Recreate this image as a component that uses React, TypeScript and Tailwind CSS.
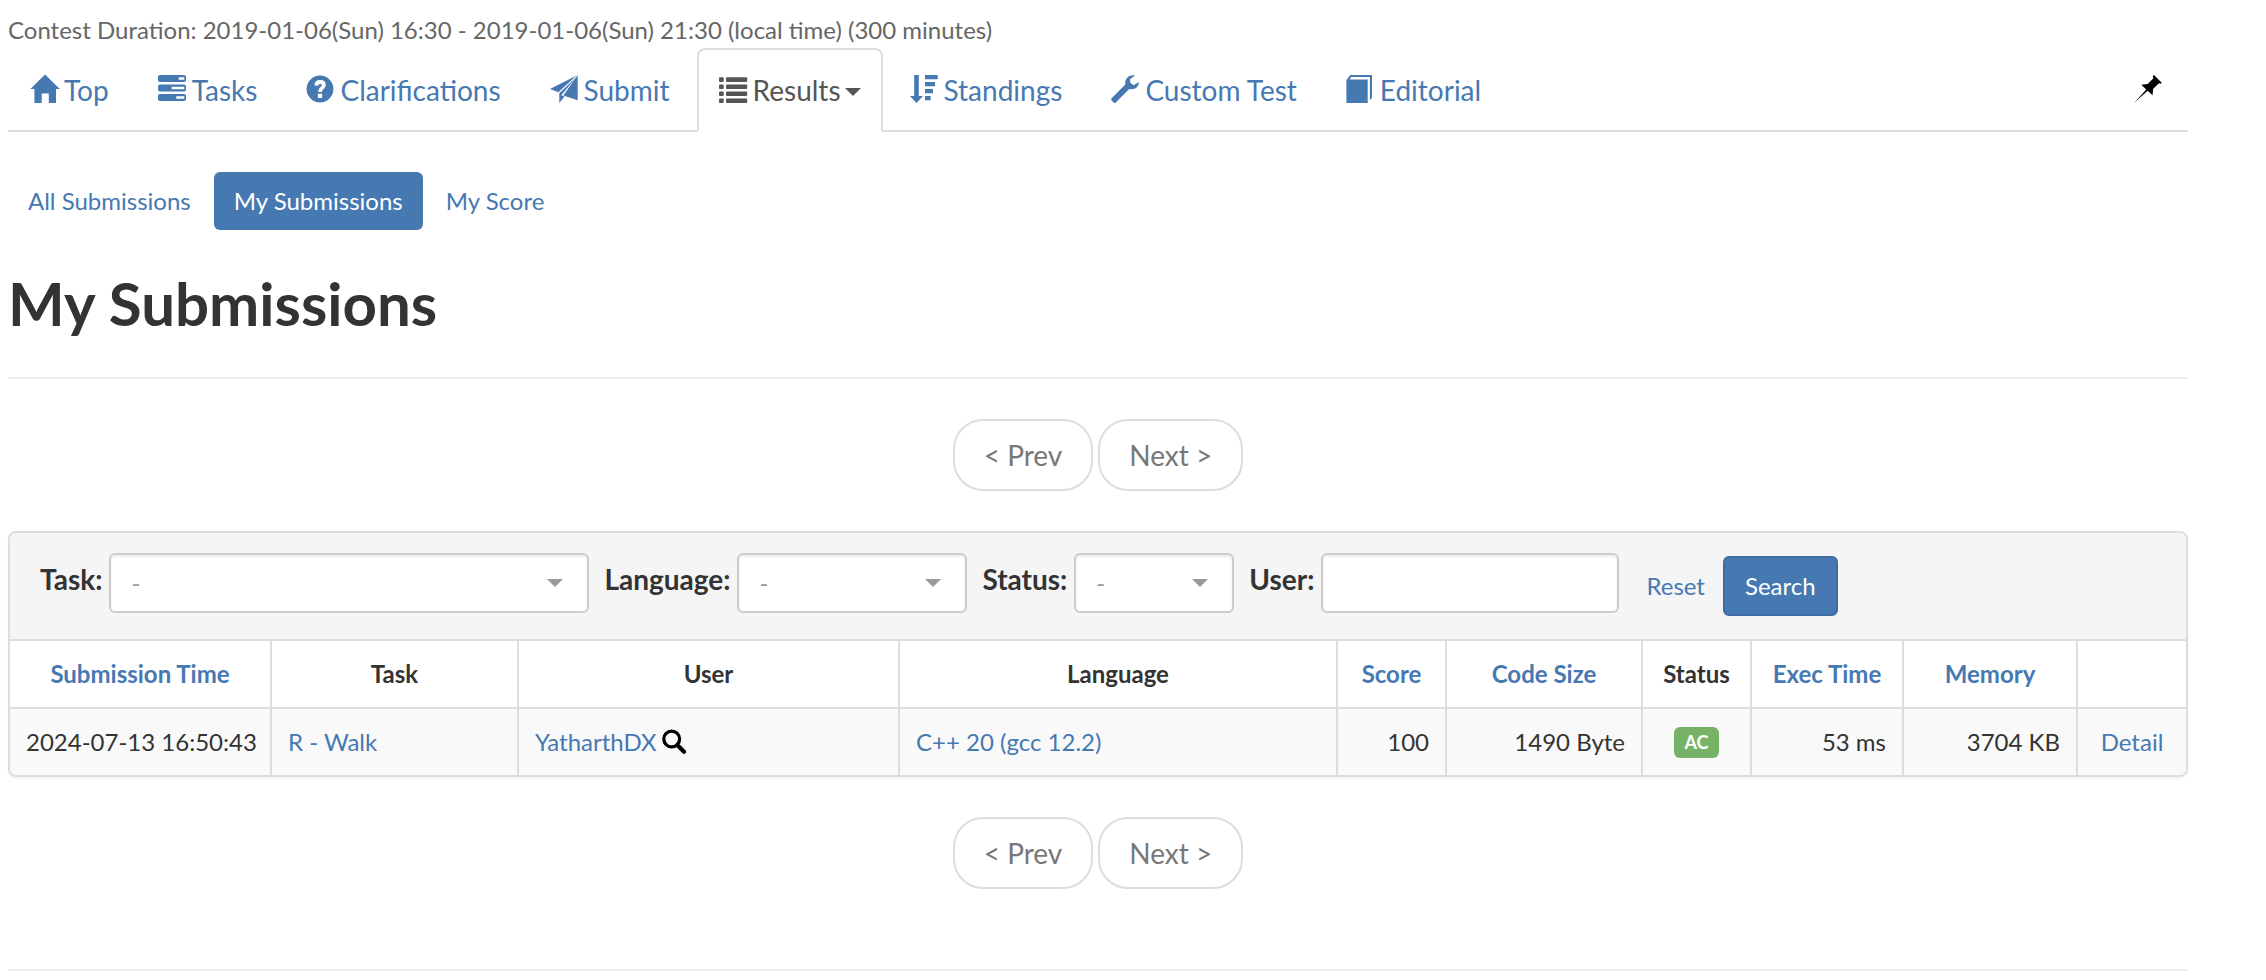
import React from "react";

type IconProps = { children: React.ReactNode };

function NavIcon({ children }: IconProps) {
  return (
    <svg viewBox="0 0 28 30" className="h-[30px] w-7 shrink-0 overflow-visible" fill="currentColor" aria-hidden="true">
      {children}
    </svg>
  );
}

const listRows = [2.3, 9.4, 16.4, 23.4];

const icons = {
  home: <path d="M15-.6 29.8 14H26v14h-7.2v-9.6h-7.1V28H4.4V14H.4z" />,
  tasks: (
    <path
      fillRule="evenodd"
      d="M2 0h24q2 0 2 2v3q0 2-2 2H2Q0 7 0 5V2q0-2 2-2zm18.7 2.2v2.5h5.6V2.2zM2 9.5h24q2 0 2 2v3q0 2-2 2H2q-2 0-2-2v-3q0-2 2-2zm11.7 2.3v2.5h12.6v-2.5zM2 19h24q2 0 2 2v3q0 2-2 2H2q-2 0-2-2v-3q0-2 2-2zm16.3 2.2v2.6h8v-2.6z"
    />
  ),
  question: (
    <>
      <circle cx="14" cy="14" r="13.4" />
      <path d="M10.3 10.6C10.4 8.2 11.8 7 14.2 7c2.3 0 3.7 1.1 3.7 2.9 0 3-3.9 3-3.9 7" fill="none" stroke="#fff" strokeWidth="3.8" />
      <path d="M11.8 18.8h4.4v4.3h-4.4z" fill="#fff" />
    </>
  ),
  send: (
    <>
      <path d="M0 13.9 26.6.4 8.4 17.3z" />
      <path d="M9.3 28V18.2L26.4 2 11.2 20.2l3.4 1.2z" />
      <path d="M27.7 0v25.3l-14.4-4.7z" />
    </>
  ),
  list: (
    <>
      {listRows.map((y) => (
        <React.Fragment key={y}>
          <rect x="0" y={y} width="4.7" height="4.7" rx="1" />
          <rect x="7" y={y} width="21.2" height="4.7" rx="1" />
        </React.Fragment>
      ))}
    </>
  ),
  sort: <path d="M4.2 0h4.6v21H13l-6.5 7L0 21h4.2zM15 0h12.7v4.2H15zM15 7h10v4.2H15zM15 14h8v4.2h-8zM15 21h5.6v4.2H15z" />,
  wrench: (
    <path d="M24 .6C18.5-.9 13.3 3.6 14.3 9.6L.6 23.2q-1 1.1 0 2.2l2 2q1 1 2.1 0l13.5-13.5C23.6 15.3 27.8 12 27.9 7l-5.4 3.3-3.2-2.5-.3-3.5z" />
  ),
  book: <path d="M.4 28V5L4.4 0H26v23l-2.1 2V2.1H5.3L3.6 4.5h18.1V28z" />,
  pin: (
    <path d="M20 0 27.7 7.7 27 8.8 25 8.2 19.2 13.8 18.5 20.3 13.6 15.7 0 28 12.2 14.4 7.3 9.7 13.7 8.9 19.4 3.2 18.8 1z" />
  ),
};

const tabs: { label: string; icon: keyof typeof icons; active?: boolean }[] = [
  { label: "Top", icon: "home" },
  { label: "Tasks", icon: "tasks" },
  { label: "Clarifications", icon: "question" },
  { label: "Submit", icon: "send" },
  { label: "Results", icon: "list", active: true },
  { label: "Standings", icon: "sort" },
  { label: "Custom Test", icon: "wrench" },
  { label: "Editorial", icon: "book" },
];

function Caret() {
  return (
    <svg viewBox="0 0 16 8" className="h-2 w-4 shrink-0" fill="currentColor" aria-hidden="true">
      <path d="M0 0h16L8 8z" />
    </svg>
  );
}

function Pager() {
  const item = "rounded-[30px] border-2 border-[#ddd] bg-white px-[29px] py-[14px] text-[28px] leading-10 text-[#777]";
  return (
    <nav aria-label="Pages" className="flex justify-center gap-[5px]">
      <a href="#prev" className={item}>&lt; Prev</a>
      <a href="#next" className={item}>Next &gt;</a>
    </nav>
  );
}

function FilterSelect({ id, label, width }: { id: string; label: string; width: string }) {
  return (
    <div className="flex gap-[7px]">
      <label htmlFor={id} className="text-[28px] leading-[52px] font-bold">{label}</label>
      <div className={`relative ${width}`}>
        <select
          id={id}
          className="h-[60px] w-full appearance-none rounded-md border-2 border-[#ccc] bg-white pl-5 text-2xl text-[#999] shadow-[inset_0_2px_2px_rgba(0,0,0,0.075)]"
        >
          <option>-</option>
        </select>
        <span className="pointer-events-none absolute inset-y-0 right-[26px] flex items-center text-[#999]">
          <Caret />
        </span>
      </div>
    </div>
  );
}

const columns = [
  { label: "Submission Time", width: "w-[262px]", link: true },
  { label: "Task", width: "w-[247px]" },
  { label: "User", width: "w-[381px]" },
  { label: "Language", width: "w-[438px]" },
  { label: "Score", width: "w-[109px]", link: true },
  { label: "Code Size", width: "w-[196px]", link: true },
  { label: "Status", width: "w-[109px]" },
  { label: "Exec Time", width: "w-[152px]", link: true },
  { label: "Memory", width: "w-[174px]", link: true },
  { label: "", width: "w-[108px]" },
];

const cell = "border-r-2 border-[#ddd] p-4 whitespace-nowrap last:border-r-0";
const link = "text-[#4678b2]";

export default function App() {
  return (
    <div className="bg-white pr-[78px] pl-2 font-[Lato,sans-serif] text-2xl leading-[34px] text-[#333]">
      <p className="pt-[14px] pb-[2px] leading-8 text-[#666]">
        Contest Duration: 2019-01-06(Sun) 16:30 - 2019-01-06(Sun) 21:30 (local time) (300 minutes)
      </p>

      <nav aria-label="Contest" className="flex border-b-2 border-[#ddd] text-[28px] leading-10">
        <ul className="flex gap-[5px]">
          {tabs.map((tab) => (
            <li key={tab.label} className="-mb-[2px]">
              <a
                href="#"
                className={
                  tab.active
                    ? "flex items-center rounded-t-lg border-2 border-[#ddd] border-b-white bg-white p-5 text-[#555]"
                    : "flex items-center border-2 border-transparent p-5 text-[#4678b2]"
                }
              >
                <NavIcon>{icons[tab.icon]}</NavIcon>
                <span className="pl-[6px]">{tab.label}</span>
                {tab.active && <span className="flex pt-1 pl-[4px]"><Caret /></span>}
              </a>
            </li>
          ))}
        </ul>
        <button type="button" aria-label="Pin menu" className="mt-[2px] mr-[26px] ml-auto text-black">
          <NavIcon>{icons.pin}</NavIcon>
        </button>
      </nav>

      <ul className="mt-10 flex gap-[3px]">
        <li><a href="#all" className="block rounded-md px-5 py-3 text-[#4678b2]">All Submissions</a></li>
        <li><a href="#mine" className="block rounded-md bg-[#4678b2] px-5 py-3 text-white">My Submissions</a></li>
        <li><a href="#score" className="block rounded-md px-5 py-3 text-[#4678b2]">My Score</a></li>
      </ul>

      <h1 className="mt-10 text-[60px] leading-[67px] font-bold">My Submissions</h1>
      <hr className="my-10 border-t-2 border-[#eee]" />

      <Pager />

      <section className="my-10 overflow-hidden rounded-lg border-2 border-[#ddd] shadow-[0_2px_2px_rgba(0,0,0,0.05)]">
        <form className="flex items-start gap-[15px] border-b-2 border-[#ddd] bg-[#f5f5f5] px-[30px] pt-5 pb-[23px]">
          <FilterSelect id="task" label="Task:" width="w-[480px]" />
          <FilterSelect id="language" label="Language:" width="w-[230px]" />
          <FilterSelect id="status" label="Status:" width="w-[160px]" />
          <div className="flex gap-[7px]">
            <label htmlFor="user" className="text-[28px] leading-[52px] font-bold">User:</label>
            <input
              id="user"
              type="text"
              className="h-[60px] w-[298px] rounded-md border-2 border-[#ccc] bg-white px-5 shadow-[inset_0_2px_2px_rgba(0,0,0,0.075)]"
            />
          </div>
          <div className="mt-[3px] flex items-center gap-[18px] pl-3">
            <a href="#reset" className={link}>Reset</a>
            <button type="button" className="h-[60px] rounded-md border-2 border-[#3f6ba2] bg-[#4678b2] px-5 text-white">
              Search
            </button>
          </div>
        </form>

        <table className="w-full table-fixed border-separate border-spacing-0">
          <thead>
            <tr>
              {columns.map((column) => (
                <th key={column.label} scope="col" className={`${column.width} ${cell} border-b-2 text-center font-bold`}>
                  {column.link ? <a href="#sort" className={link}>{column.label}</a> : column.label}
                </th>
              ))}
            </tr>
          </thead>
          <tbody>
            <tr className="bg-[#f9f9f9]">
              <td className={cell}>2024-07-13 16:50:43</td>
              <td className={cell}><a href="#task-r" className={link}>R - Walk</a></td>
              <td className={cell}>
                <span className="flex items-center gap-[5px]">
                  <a href="#user-page" className={link}>YatharthDX</a>
                  <svg viewBox="0 0 24 26" className="h-[26px] w-6 text-black" fill="none" stroke="currentColor" aria-label="Search user">
                    <circle cx="9.7" cy="10" r="7.9" strokeWidth="3.2" />
                    <path d="m15.3 16 6.7 6.7" strokeWidth="4.2" strokeLinecap="round" />
                  </svg>
                </span>
              </td>
              <td className={cell}><a href="#lang" className={link}>C++ 20 (gcc 12.2)</a></td>
              <td className={`${cell} text-right`}>100</td>
              <td className={`${cell} text-right`}>1490 Byte</td>
              <td className={cell}>
                <span className="mx-auto block w-fit rounded-md bg-[#77b366] px-[10px] text-lg leading-[31px] font-bold text-white">AC</span>
              </td>
              <td className={`${cell} text-right`}>53 ms</td>
              <td className={`${cell} text-right`}>3704 KB</td>
              <td className={`${cell} text-center`}><a href="#detail" className={link}>Detail</a></td>
            </tr>
          </tbody>
        </table>
      </section>

      <Pager />
      <hr className="mt-20 border-t-2 border-[#eee]" />
    </div>
  );
}
